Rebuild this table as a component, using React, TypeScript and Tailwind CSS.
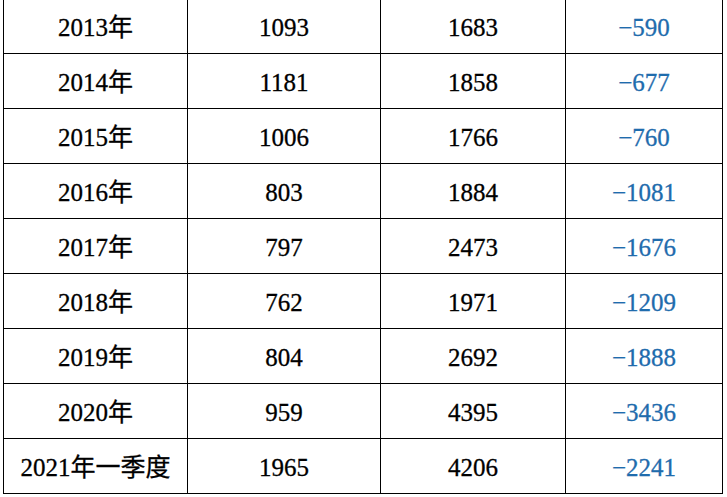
const ROWS: [string, string, string, string][] = [
  ["2013年", "1093", "1683", "−590"],
  ["2014年", "1181", "1858", "−677"],
  ["2015年", "1006", "1766", "−760"],
  ["2016年", "803", "1884", "−1081"],
  ["2017年", "797", "2473", "−1676"],
  ["2018年", "762", "1971", "−1209"],
  ["2019年", "804", "2692", "−1888"],
  ["2020年", "959", "4395", "−3436"],
  ["2021年一季度", "1965", "4206", "−2241"],
];

export default function App() {
  return (
    <div
      className="h-[497px] w-[727px] overflow-hidden bg-white pl-[3px] text-[25px] text-black"
      style={{ fontFamily: '"Liberation Serif", "Noto Sans CJK SC", serif' }}
    >
      <div className="-mt-[2px] grid w-max grid-cols-[184px_193px_185px_157px] border-l border-t border-black">
        {ROWS.map((r) => (
          <div key={r[0]} className="contents">
            {r.map((cell, i) => (
              <div
                key={i}
                className={
                  "flex h-[55px] items-center justify-center border-b border-r border-black pt-[3px] [-webkit-text-stroke:0.3px_currentColor] " +
                  (i === 3 ? "text-[#1f6cad]" : "")
                }
              >
                {cell}
              </div>
            ))}
          </div>
        ))}
      </div>
    </div>
  );
}
